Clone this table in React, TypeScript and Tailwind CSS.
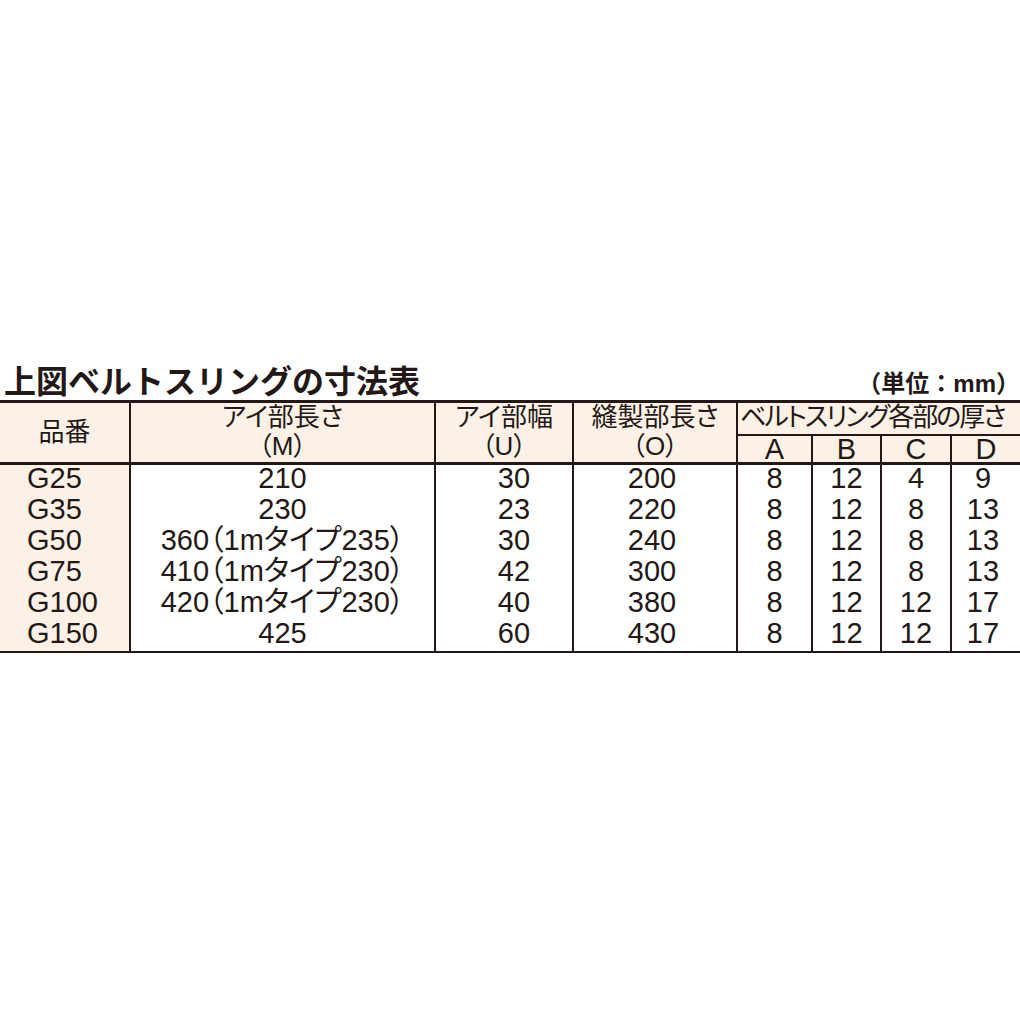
import React from 'react'

const rows = [
  { no: 'G25', m: '210', u: '30', o: '200', a: '8', b: '12', c: '4', d: '9' },
  { no: 'G35', m: '230', u: '23', o: '220', a: '8', b: '12', c: '8', d: '13' },
  { no: 'G50', m: '360（1mタイプ235）', u: '30', o: '240', a: '8', b: '12', c: '8', d: '13' },
  { no: 'G75', m: '410（1mタイプ230）', u: '42', o: '300', a: '8', b: '12', c: '8', d: '13' },
  { no: 'G100', m: '420（1mタイプ230）', u: '40', o: '380', a: '8', b: '12', c: '12', d: '17' },
  { no: 'G150', m: '425', u: '60', o: '430', a: '8', b: '12', c: '12', d: '17' },
]

export default function App() {
  return (
    <div className="w-[1020px] h-[1020px] bg-white text-[#231815] font-['Liberation_Sans','Noto_Sans_CJK_JP',sans-serif] pt-[359px]">
      {/* Title */}
      <div className="flex items-end justify-between pl-[4px] mb-[1px]">
        <h1 className="text-[32px] leading-[40px] font-bold font-['Noto_Sans_CJK_JP',sans-serif]">
          上図ベルトスリングの寸法表
        </h1>
        <span className="text-[24px] leading-[31px] font-bold font-['Liberation_Sans','Noto_Sans_CJK_JP',sans-serif]">
          （単位：mm）
        </span>
      </div>

      {/* Table */}
      <table className="w-full table-fixed border-collapse [font-feature-settings:'palt']">
        <colgroup>
          <col className="w-[130px]" />
          <col className="w-[305px]" />
          <col className="w-[138px]" />
          <col className="w-[164px]" />
          <col className="w-[75px]" />
          <col className="w-[69px]" />
          <col className="w-[70px]" />
          <col className="w-[69px]" />
        </colgroup>
        <thead className="bg-[#fcf1e6]">
          <tr className="h-[33px]">
            <th rowSpan={2} className="font-normal text-[26px] leading-[28px] border-t-[3px] border-b-[3px] border-r-2 border-[#231815] align-middle">
              品番
            </th>
            <th rowSpan={2} className="font-normal text-[26px] leading-[29px] border-t-[3px] border-b-[3px] border-x-2 border-[#231815] align-top">
              アイ部長さ<br />（M）
            </th>
            <th rowSpan={2} className="font-normal text-[26px] leading-[29px] border-t-[3px] border-b-[3px] border-x-2 border-[#231815] align-top">
              アイ部幅<br />（U）
            </th>
            <th rowSpan={2} className="font-normal text-[26px] leading-[29px] border-t-[3px] border-b-[3px] border-x-2 border-[#231815] align-top">
              縫製部長さ<br />（O）
            </th>
            <th colSpan={4} className="font-normal text-[26px] leading-[29px] border-t-[3px] border-b-2 border-l-2 border-[#231815] align-top whitespace-nowrap tracking-[-2px] text-left pl-[2px]">
              ベルトスリング各部の厚さ
            </th>
          </tr>
          <tr className="h-[28px]">
            {['A', 'B', 'C', 'D'].map((h, i) => (
              <th
                key={h}
                className={`font-normal text-[29px] leading-[26px] border-b-[3px] border-[#231815] align-bottom ${i < 3 ? 'border-r-2' : ''} ${i === 0 ? 'border-l-2' : ''}`}
              >
                {h}
              </th>
            ))}
          </tr>
        </thead>
        <tbody className="text-[29px] leading-[26px]">
          {rows.map((r, i) => {
            const last = i === rows.length - 1
            const cell = `pb-[5px] border-[#231815] ${last ? 'border-b-2' : ''}`
            return (
              <tr key={r.no} className="h-[31px]">
                <td className={`${cell} bg-[#fcf1e6] text-left pl-[27px] border-r-2`}>{r.no}</td>
                <td className={`${cell} text-center border-x-2 whitespace-nowrap`}>{r.m}</td>
                <td className={`${cell} text-center pl-[20px] border-x-2`}>{r.u}</td>
                <td className={`${cell} text-center pr-[6px] border-x-2`}>{r.o}</td>
                <td className={`${cell} text-center border-x-2`}>{r.a}</td>
                <td className={`${cell} text-center border-x-2`}>{r.b}</td>
                <td className={`${cell} text-center border-x-2`}>{r.c}</td>
                <td className={`${cell} text-center pr-[6px] border-l-2`}>{r.d}</td>
              </tr>
            )
          })}
        </tbody>
      </table>
    </div>
  )
}
